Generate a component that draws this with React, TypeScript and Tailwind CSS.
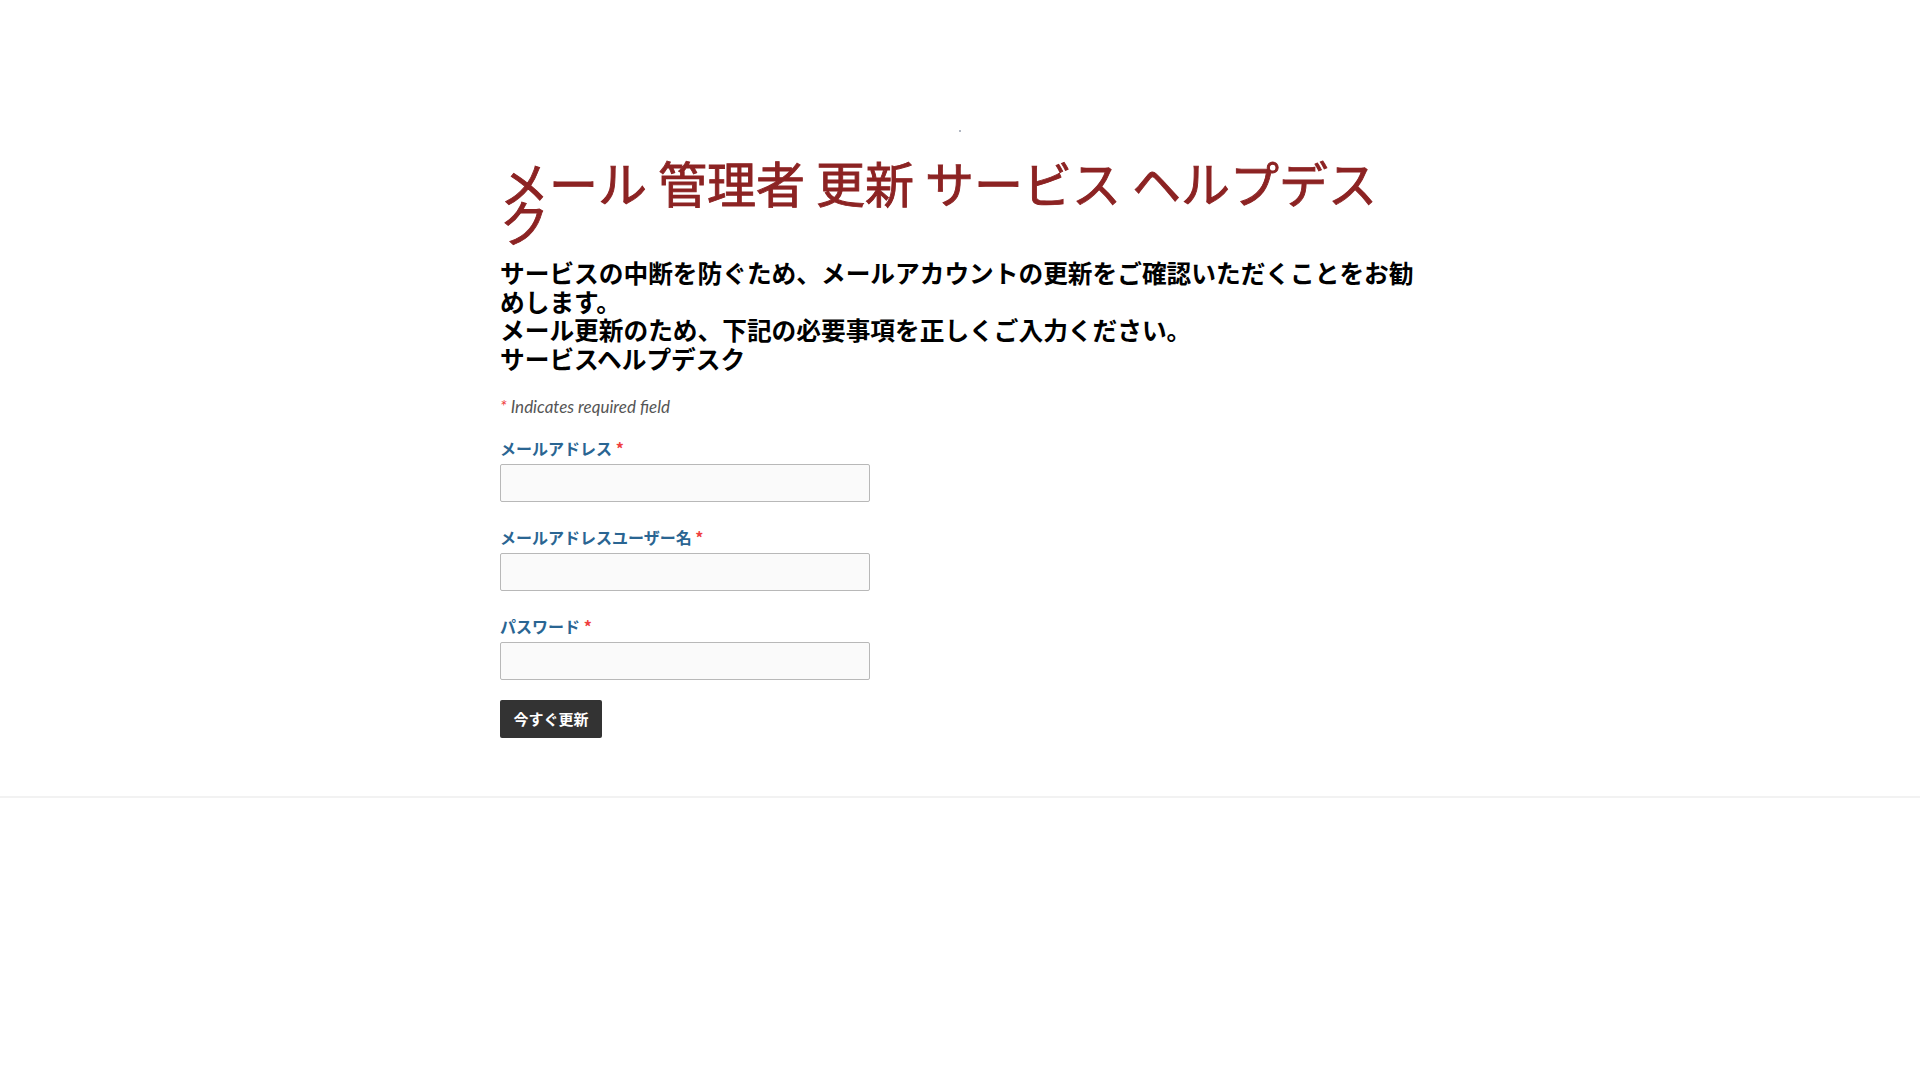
const fields = [
  { id: "email", label: "メールアドレス", type: "email" },
  { id: "user", label: "メールアドレスユーザー名", type: "text" },
  { id: "pass", label: "パスワード", type: "password" },
];

const jp = "font-['Noto_Sans_CJK_JP','Noto_Sans',sans-serif]";

export default function App() {
  return (
    <div className="min-h-screen bg-white">
      <div className="mx-auto w-[940px] px-[10px] pt-[130px]">
        <div className="flex justify-center">
          <span className="block h-[2px] w-[2px] rounded-full bg-gray-400" />
        </div>

        <h1
          className={`${jp} mt-[30px] text-[49px] font-normal leading-[39px] text-[#8c2323] [-webkit-text-stroke:0.9px_#8c2323]`}
        >
          メール 管理者 更新 サービス ヘルプデスク
        </h1>

        <p className={`${jp} mt-[18px] text-[24.7px] font-bold leading-[28.5px] text-black`}>
          サービスの中断を防ぐため、メールアカウントの更新をご確認いただくことをお勧めします。
          <br />
          メール更新のため、下記の必要事項を正しくご入力ください。
          <br />
          サービスヘルプデスク
        </p>

        <form className="mt-[25px]" onSubmit={(e) => e.preventDefault()}>
          <div className="font-['Lato','Open_Sans',sans-serif] text-[17px] italic leading-[20px] text-[#555]">
            <span className="text-[#ef4040]">*</span> Indicates required field
          </div>

          {fields.map((f, i) => (
            <div key={f.id} className={i === 0 ? "mt-[21px]" : "mt-[25px]"}>
              <label
                htmlFor={f.id}
                className={`${jp} block text-[16px] font-bold leading-[20px] text-[#2a6592]`}
              >
                {f.label} <span className="text-[#ef4040]">*</span>
              </label>
              <input
                id={f.id}
                type={f.type}
                className="mt-[6px] block h-[38px] w-[370px] rounded-[2px] border border-[#b8b8b8] bg-[#fafafa] px-2 outline-none"
              />
            </div>
          ))}

          <button
            type="submit"
            className={`${jp} mt-[20px] flex h-[38px] w-[102px] items-center justify-center rounded-[2px] bg-[#333] text-[15px] font-bold text-white`}
          >
            今すぐ更新
          </button>
        </form>
      </div>

      <div className="mt-[58px] h-[2px] w-full bg-[#f2f2f2]" />
    </div>
  );
}
